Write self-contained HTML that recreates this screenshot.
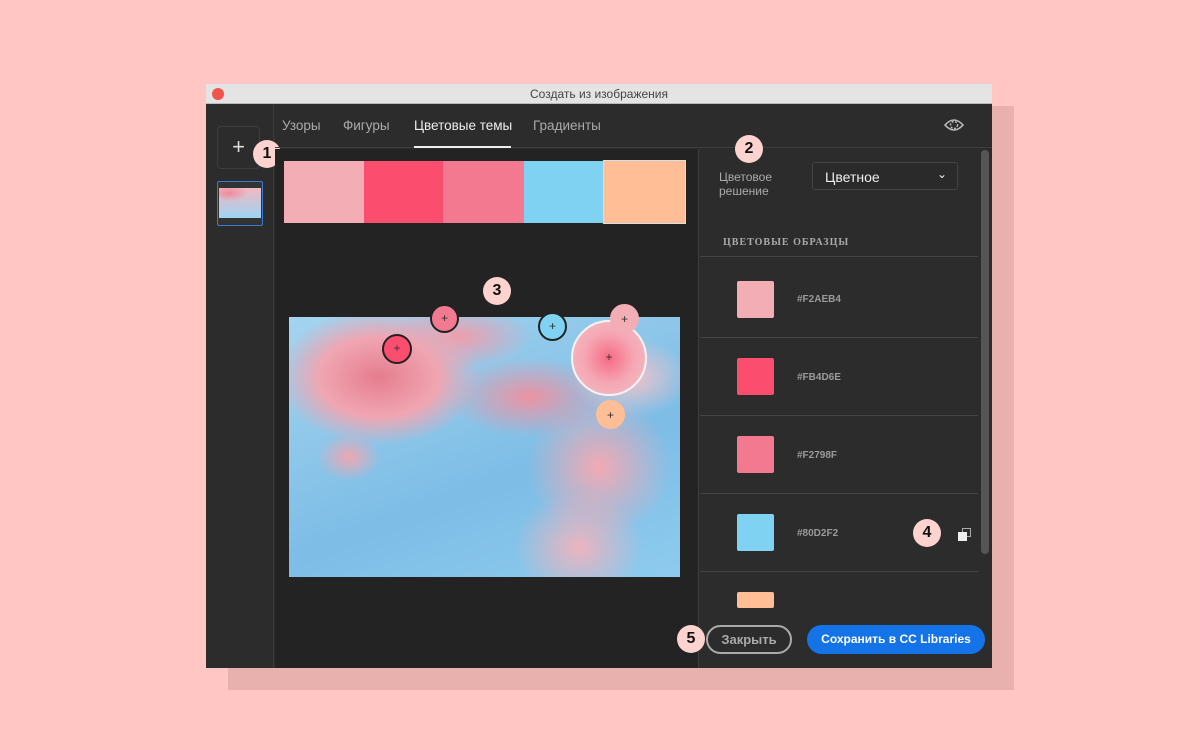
<!DOCTYPE html><html><head><meta charset="utf-8"><style>
*{margin:0;padding:0;box-sizing:border-box}
body{width:1200px;height:750px;background:#ffc6c3;position:relative;overflow:hidden;font-family:"Liberation Sans","DejaVu Sans",sans-serif}
.a{position:absolute}
.badge{position:absolute;width:28px;height:28px;border-radius:50%;background:#fcd3cf;color:#111;font-weight:bold;font-size:16px;text-align:center;line-height:28px}
.sw{position:absolute;left:737px;width:37px;height:37px;border-radius:2px}
.hx{position:absolute;left:797px;font-size:10px;color:#9a9a9a;font-weight:bold}
.ln{position:absolute;left:700px;width:278px;height:1px;background:#444}
.pin{position:absolute;border-radius:50%;border:2px solid #222;color:#333;font-size:12px;text-align:center}
</style></head><body>
<div class="a" style="left:228px;top:106px;width:786px;height:584px;background:#e8b1ae"></div>
<div class="a" style="left:206px;top:84px;width:786px;height:584px;background:#2c2c2c"></div>
<div class="a" style="left:206px;top:84px;width:786px;height:20px;background:#e4e4e4;border-bottom:1px solid #bbb"></div>
<div class="a" style="left:212px;top:88px;width:12px;height:12px;border-radius:50%;background:#f0544c"></div>
<div class="a" style="left:206px;top:87px;width:786px;text-align:center;font-size:12px;color:#444">Создать из изображения</div>
<div class="a" style="left:206px;top:104px;width:68px;height:564px;background:#2c2c2c;border-right:1px solid #3c3c3c"></div>
<div class="a" style="left:217px;top:126px;width:43px;height:43px;border:1px solid #3e3e3e;border-radius:4px;color:#ddd;font-size:22px;text-align:center;line-height:40px">+</div>
<div class="a" style="left:217px;top:181px;width:46px;height:45px;border:1px solid #3a7bd5;border-radius:2px;background:#333"><div style="margin:6px 1px;height:30px;background:radial-gradient(ellipse 20px 8px at 10px 5px,#f08a9a,transparent),linear-gradient(#f3b9c2,#9dd3f2)"></div></div>
<div class="badge" style="left:253px;top:140px">1</div>
<div class="a" style="left:275px;top:104px;width:717px;height:44px;border-bottom:1px solid #3e3e3e"></div>
<div class="a" style="left:282px;top:118px;font-size:13.5px;color:#aaa">Узоры</div>
<div class="a" style="left:343px;top:118px;font-size:13.5px;color:#aaa">Фигуры</div>
<div class="a" style="left:414px;top:118px;font-size:13.5px;color:#eee">Цветовые темы</div>
<div class="a" style="left:414px;top:146px;width:97px;height:2px;background:#eee"></div>
<div class="a" style="left:533px;top:118px;font-size:13.5px;color:#aaa">Градиенты</div>
<svg class="a" style="left:943px;top:115px" width="22" height="20" viewBox="0 0 22 20"><path d="M2 10Q11 0 20 10Q11 20 2 10Z" fill="none" stroke="#bbb" stroke-width="1.6"/><circle cx="11" cy="10" r="3.5" fill="none" stroke="#bbb" stroke-width="1.4" stroke-dasharray="2 1.5"/></svg>
<div class="a" style="left:275px;top:149px;width:423px;height:519px;background:#232323"></div>
<div class="a" style="left:284px;top:161px;width:80px;height:62px;background:#f2aeb4"></div>
<div class="a" style="left:364px;top:161px;width:80px;height:62px;background:#fb4d6e"></div>
<div class="a" style="left:443px;top:161px;width:81px;height:62px;background:#f2798f"></div>
<div class="a" style="left:524px;top:161px;width:80px;height:62px;background:#80d2f2"></div>
<div class="a" style="left:603px;top:160px;width:83px;height:64px;background:#ffbe96;border:1px solid #ddd"></div>
<div class="badge" style="left:483px;top:277px">3</div>
<div class="a" style="left:289px;top:317px;width:391px;height:260px;background:
radial-gradient(ellipse 60px 40px at 340px 60px,#f4c2c8,transparent),
radial-gradient(ellipse 120px 80px at 90px 60px,#e57d8e 0%,#f0a6b2 50%,transparent 85%),
radial-gradient(ellipse 100px 50px at 240px 80px,#ec93a2 0%,transparent 80%),
radial-gradient(ellipse 90px 90px at 310px 150px,#f2aab3 0%,transparent 80%),
radial-gradient(ellipse 90px 40px at 170px 20px,#ef9ead 0%,transparent 80%),
radial-gradient(ellipse 80px 70px at 290px 230px,#ecb4be 0%,transparent 80%),
radial-gradient(ellipse 40px 30px at 60px 140px,#eda7b2 0%,transparent 80%),
linear-gradient(160deg,#a4d4ee,#7dbde6 60%,#8ecbee)"></div>
<div class="pin" style="left:571px;top:320px;width:76px;height:76px;border-color:#f5f5f5;background:radial-gradient(#f76a84,#f5a8b4 50%,#f2c0c8);line-height:70px">+</div>
<div class="pin" style="left:430px;top:304px;width:29px;height:29px;background:#f2798f;line-height:24px">+</div>
<div class="pin" style="left:538px;top:312px;width:29px;height:29px;background:#80d2f2;line-height:24px">+</div>
<div class="pin" style="left:610px;top:304px;width:29px;height:29px;background:#f2aeb4;border-color:#f2aeb4;line-height:26px">+</div>
<div class="pin" style="left:382px;top:334px;width:30px;height:30px;background:#fb4d6e;line-height:25px">+</div>
<div class="pin" style="left:596px;top:400px;width:29px;height:29px;background:#ffbe96;border-color:#ffbe96;line-height:26px">+</div>
<div class="a" style="left:698px;top:149px;width:1px;height:519px;background:#3e3e3e"></div>
<div class="badge" style="left:735px;top:135px">2</div>
<div class="a" style="left:719px;top:170px;font-size:12px;color:#aaa;line-height:14px">Цветовое<br>решение</div>
<div class="a" style="left:812px;top:162px;width:146px;height:28px;border:1px solid #444;border-radius:3px;background:#2a2a2a;color:#eee;font-size:14px;padding:6px 12px">Цветное<span style="position:absolute;right:10px;top:4px;font-size:12px">⌄</span></div>
<div class="a" style="left:723px;top:237px;font-family:'Liberation Serif',serif;font-size:10px;color:#aaa;letter-spacing:1px;font-weight:bold">ЦВЕТОВЫЕ ОБРАЗЦЫ</div>
<div class="ln" style="top:256px"></div>
<div class="sw" style="top:281px;background:#f2aeb4"></div><div class="hx" style="top:294px">#F2AEB4</div>
<div class="ln" style="top:337px"></div>
<div class="sw" style="top:358px;background:#fb4d6e"></div><div class="hx" style="top:372px">#FB4D6E</div>
<div class="ln" style="top:415px"></div>
<div class="sw" style="top:436px;background:#f2798f"></div><div class="hx" style="top:450px">#F2798F</div>
<div class="ln" style="top:493px"></div>
<div class="sw" style="top:514px;background:#80d2f2"></div><div class="hx" style="top:528px">#80D2F2</div>
<div class="badge" style="left:913px;top:519px">4</div>
<div class="a" style="left:962px;top:528px;width:9px;height:9px;border:1px solid #aaa"></div>
<div class="a" style="left:958px;top:532px;width:9px;height:9px;background:#eee"></div>
<div class="ln" style="top:571px"></div>
<div class="sw" style="top:592px;height:16px;background:#ffbe96"></div>
<div class="a" style="left:981px;top:150px;width:8px;height:404px;border-radius:4px;background:#555"></div>
<div class="a" style="left:699px;top:608px;width:282px;height:60px;background:#2c2c2c"></div>
<div class="badge" style="left:677px;top:625px">5</div>
<div class="a" style="left:706px;top:625px;width:86px;height:29px;border:2px solid #aaa;border-radius:15px;color:#aaa;font-weight:bold;font-size:13px;text-align:center;line-height:25px">Закрыть</div>
<div class="a" style="left:807px;top:625px;width:178px;height:29px;border-radius:15px;background:#1473e6;color:#fff;font-weight:bold;font-size:12px;text-align:center;line-height:29px">Сохранить в CC Libraries</div>
</body></html>
